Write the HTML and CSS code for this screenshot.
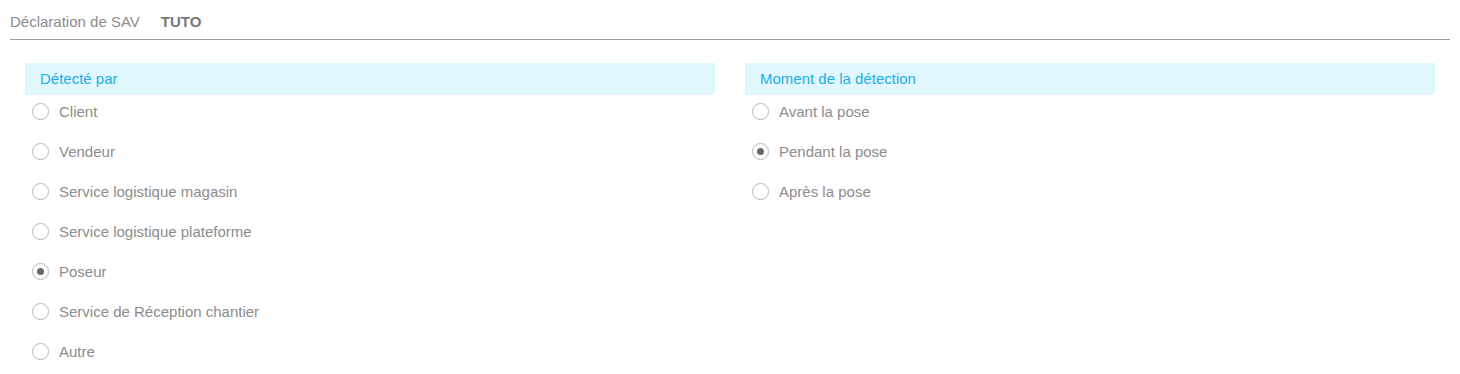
FILE: index.html
```html
<!DOCTYPE html>
<html lang="fr">
<head>
    <meta charset="UTF-8">
    <meta name="viewport" content="width=device-width, initial-scale=1.0">
    <title>Déclaration de SAV</title>

    <link rel="stylesheet" href="styles.css">
</head>
<body>
    <div class="page">
        <div class="tabs">
            <span class="tab">Déclaration de SAV</span>
            <span class="tab bold">TUTO</span>
        </div>
        <div class="columns">
            <div class="column">
                <div class="title">Détecté par</div>
                <div class="options">
                    <label class="option"><span class="radio"></span>Client</label>
                    <label class="option"><span class="radio"></span>Vendeur</label>
                    <label class="option"><span class="radio"></span>Service logistique magasin</label>
                    <label class="option"><span class="radio"></span>Service logistique plateforme</label>
                    <label class="option"><span class="radio checked"></span>Poseur</label>
                    <label class="option"><span class="radio"></span>Service de Réception chantier</label>
                    <label class="option"><span class="radio"></span>Autre</label>
                </div>
            </div>
            <div class="column">
                <div class="title">Moment de la détection</div>
                <div class="options">
                    <label class="option"><span class="radio"></span>Avant la pose</label>
                    <label class="option"><span class="radio checked"></span>Pendant la pose</label>
                    <label class="option"><span class="radio"></span>Après la pose</label>
                </div>
            </div>
        </div>
    </div>
</body>
</html>
```

FILE: styles.css
```css
*{
    margin: 0;
    padding: 0;
    box-sizing: border-box;
}
body{
    width: 100%;
    background-color: #fff;
    font-family: "Liberation Sans", Arial, sans-serif;
    font-size: 15px;
    color: #8c8c8c;
}
.page{
    padding: 0 10px;
}
.tabs{
    display: flex;
    gap: 21px;
    height: 40px;
    padding-top: 13px;
    border-bottom: 1px solid #9e9e9e;
}
.tab{
    line-height: 18px;
}
.tab.bold{
    font-weight: bold;
    color: #777;
}
.columns{
    display: flex;
    padding-top: 23px;
}
.column{
    width: 50%;
    padding: 0 15px;
}
.title{
    height: 32px;
    line-height: 32px;
    padding-left: 15px;
    background-color: #e1f7fe;
    color: #1eaee6;
}
.options{
    display: flex;
    flex-direction: column;
    gap: 20px;
    padding-top: 6px;
}
.option{
    display: flex;
    align-items: center;
    height: 20px;
    gap: 10px;
    padding-left: 7px;
}
.radio{
    width: 17px;
    height: 17px;
    border: 1px solid #b8b8b8;
    border-radius: 50%;
    display: flex;
    justify-content: center;
    align-items: center;
}
.radio.checked::after{
    content: "";
    width: 7px;
    height: 7px;
    border-radius: 50%;
    background-color: #666;
}
```
